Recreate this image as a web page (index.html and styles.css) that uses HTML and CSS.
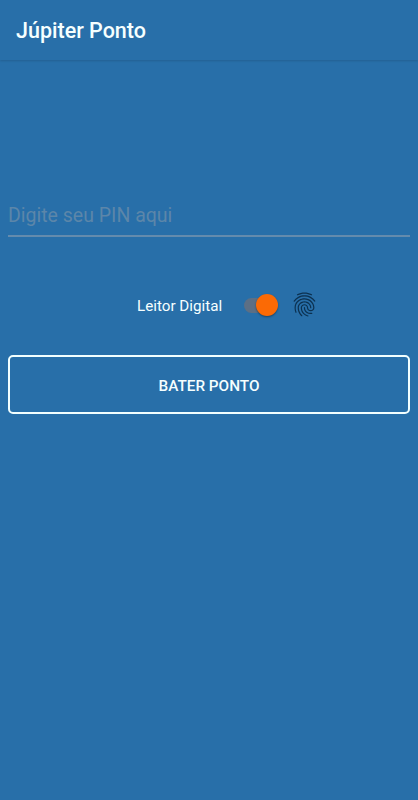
FILE: index.html
```
<!DOCTYPE html>
<html lang="pt-BR">
<head>
    <meta charset="UTF-8">
    <meta name="viewport" content="width=device-width, initial-scale=1.0">
    <title>Júpiter Ponto</title>
    <link rel="stylesheet" href="styles.css">
</head>
<body>
    <header class="toolbar">
        <h1 class="title">Júpiter Ponto</h1>
    </header>
    <main class="content">
        <input class="pin" type="text" placeholder="Digite seu PIN aqui">
        <div class="reader">
            <span class="reader-label">Leitor Digital</span>
            <span class="switch"><span class="thumb"></span></span>
            <svg class="fingerprint" viewBox="0 0 24 24">
                <path d="M17.81 4.47c-.08 0-.16-.02-.23-.06C15.66 3.42 14 3 12.01 3c-1.98 0-3.86.47-5.57 1.41-.24.13-.54.04-.68-.2-.13-.24-.04-.55.2-.68C7.82 2.52 9.86 2 12.01 2c2.13 0 3.99.47 6.03 1.52.25.13.34.43.21.67-.09.18-.26.28-.44.28zM3.5 9.72c-.1 0-.2-.03-.29-.09-.23-.16-.28-.47-.12-.7.99-1.4 2.25-2.5 3.75-3.27C9.98 4.04 14 4.03 17.15 5.65c1.5.77 2.76 1.86 3.75 3.25.16.22.11.54-.12.7-.23.16-.54.11-.7-.12-.9-1.26-2.04-2.25-3.39-2.94-2.87-1.47-6.54-1.47-9.4.01-1.36.7-2.5 1.7-3.4 2.96-.08.14-.23.21-.39.21zm6.25 12.07c-.13 0-.26-.05-.35-.15-.87-.87-1.34-1.43-2.01-2.64-.69-1.23-1.05-2.73-1.05-4.34 0-2.97 2.54-5.39 5.66-5.39s5.66 2.42 5.66 5.39c0 .28-.22.5-.5.5s-.5-.22-.5-.5c0-2.42-2.09-4.39-4.66-4.39-2.57 0-4.66 1.97-4.66 4.39 0 1.44.32 2.77.93 3.85.64 1.15 1.08 1.64 1.85 2.42.19.2.19.51 0 .71-.11.1-.24.15-.37.15zm7.17-1.85c-1.19 0-2.24-.3-3.1-.89-1.49-1.01-2.38-2.65-2.38-4.39 0-.28.22-.5.5-.5s.5.22.5.5c0 1.41.72 2.74 1.94 3.56.71.48 1.54.71 2.54.71.24 0 .64-.03 1.04-.1.27-.05.53.13.58.41.05.27-.13.53-.41.58-.57.11-1.07.12-1.21.12zM14.91 22c-.04 0-.09-.01-.13-.02-1.59-.44-2.63-1.03-3.72-2.1-1.4-1.39-2.17-3.24-2.17-5.22 0-1.62 1.38-2.94 3.08-2.94 1.7 0 3.08 1.32 3.08 2.94 0 1.07.93 1.94 2.08 1.94s2.08-.87 2.08-1.94c0-3.77-3.25-6.83-7.25-6.83-2.84 0-5.44 1.58-6.61 4.03-.39.81-.59 1.76-.59 2.8 0 .78.07 2.01.67 3.61.1.26-.03.55-.29.64-.26.1-.55-.04-.64-.29-.49-1.31-.73-2.61-.73-3.96 0-1.2.23-2.29.68-3.24 1.33-2.79 4.28-4.6 7.51-4.6 4.55 0 8.25 3.51 8.25 7.83 0 1.62-1.38 2.94-3.08 2.94s-3.08-1.32-3.08-2.94c0-1.07-.93-1.94-2.08-1.94s-2.08.87-2.08 1.94c0 1.71.66 3.31 1.87 4.51.95.94 1.86 1.46 3.27 1.85.27.07.42.35.35.61-.05.23-.26.38-.47.38z"/>
            </svg>
        </div>
        <button class="punch" type="button">BATER PONTO</button>
    </main>
</body>
</html>
```

FILE: styles.css
```
* {
    box-sizing: border-box;
}

body {
    margin: 0;
    min-height: 100vh;
    background: #286fa9;
    color: #f6ffff;
    font-family: Roboto, sans-serif;
}

.toolbar {
    display: flex;
    align-items: center;
    height: 60px;
    padding: 1px 16px 0;
    box-shadow: 0 1px 2px rgba(0, 0, 0, 0.14);
}

.title {
    margin: 0;
    font-size: 21.5px;
    font-weight: 500;
}

.content {
    display: flex;
    flex-direction: column;
    padding: 135px 8px 0;
}

.pin {
    width: 100%;
    height: 42px;
    padding: 0;
    border: 0;
    border-bottom: 2px solid #648bad;
    outline: none;
    background: transparent;
    color: #f6ffff;
    font-family: inherit;
    font-size: 19.5px;
}

.pin::placeholder {
    color: #5c86a9;
    opacity: 1;
}

.reader {
    display: flex;
    align-items: center;
    height: 30px;
    margin-top: 53px;
    padding-left: 129px;
}

.reader-label {
    width: 107px;
    font-size: 15.2px;
    line-height: 30px;
    padding-top: 1px;
}

/* Track with the thumb pushed to the "on" side */
.switch {
    display: flex;
    align-items: center;
    justify-content: flex-end;
    width: 34px;
    height: 15px;
    border-radius: 8px;
    background: #5c6f85;
}

.thumb {
    flex: none;
    width: 22px;
    height: 22px;
    border-radius: 50%;
    background: #fb6a05;
    box-shadow: 0 1px 2px rgba(0, 0, 0, 0.4);
}

.fingerprint {
    width: 29px;
    height: 29px;
    margin-left: 12px;
    margin-top: -1px;
    fill: #0c3150;
}

.punch {
    height: 59px;
    margin-top: 35px;
    padding: 2px 0 0;
    border: 2px solid #f2ffff;
    border-radius: 5px;
    background: transparent;
    color: #f6ffff;
    font-family: inherit;
    font-size: 15.3px;
    font-weight: 500;
}
```
